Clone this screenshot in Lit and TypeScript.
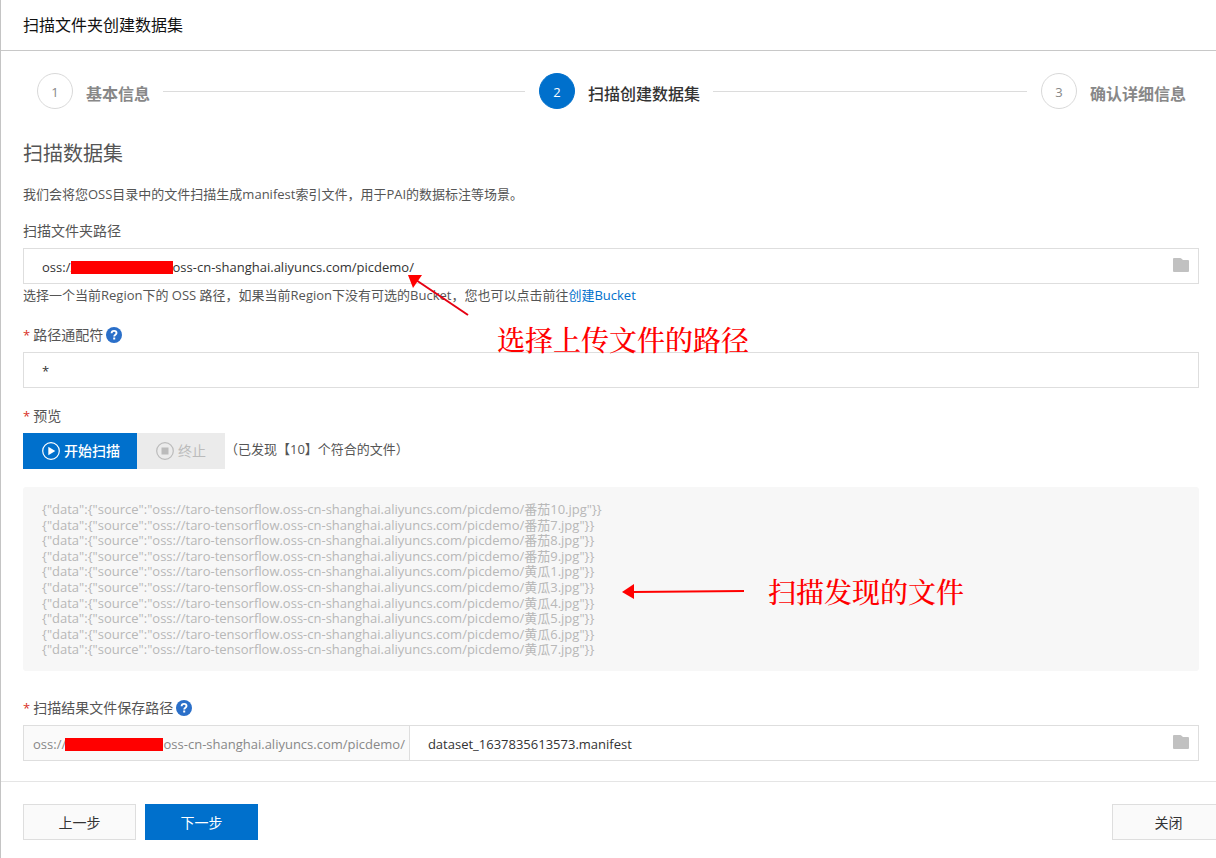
import { LitElement, html, css, svg } from "lit";
import { customElement, property } from "lit/decorators.js";

const BUCKET_PATH = "oss://taro-tensorflow.oss-cn-shanghai.aliyuncs.com/picdemo/";

const FILES = [
  "番茄10", "番茄7", "番茄8", "番茄9", "黄瓜1",
  "黄瓜3", "黄瓜4", "黄瓜5", "黄瓜6", "黄瓜7",
];

const STEPS = ["基本信息", "扫描创建数据集", "确认详细信息"];

const folderIcon = html`<svg width="16" height="14" viewBox="0 0 16 14" aria-hidden="true">
  <path fill="#c1c1c1" d="M1 0h6.2c.5 0 .8.2 1.1.5L10 2h5a1 1 0 0 1 1 1v10a1 1 0 0 1-1 1H1a1 1 0 0 1-1-1V1a1 1 0 0 1 1-1z" />
</svg>`;

const helpIcon = html`<svg class="help-icon" width="16" height="16" viewBox="0 0 16 16" role="img" aria-label="帮助">
  <circle cx="8" cy="8" r="8" fill="#2a6fc9" />
  <path d="M5.6 6.3c0-1.5 1-2.4 2.5-2.4s2.4.9 2.4 2.1c0 1.7-2.3 1.7-2.3 3.5" fill="none" stroke="#fff" stroke-width="1.9" />
  <rect x="7.2" y="10.5" width="2" height="2" fill="#fff" />
</svg>`;

const buttonIcon = (shape: unknown) => html`<svg width="18" height="18" viewBox="0 0 18 18" aria-hidden="true">
  <circle cx="9" cy="9" r="8.3" fill="none" stroke="currentColor" stroke-width="1.2" />
  ${shape}
</svg>`;

@customElement("wizard-steps")
export class WizardSteps extends LitElement {
  @property({ type: Number }) current = 1;

  static styles = css`
    :host { display: block; }
    .steps { display: flex; margin: 0; padding: 0; list-style: none; }
    .step { display: flex; align-items: center; flex: 1 1 0; gap: 13px; padding-left: 14px; color: #888; }
    .step:last-child { flex: none; padding-right: 13px; }
    .number {
      display: flex; align-items: center; justify-content: center; flex: none;
      box-sizing: border-box; width: 36px; height: 36px; padding-top: 2px;
      border: 1px solid #d9d9d9; border-radius: 50%; font-size: 13px;
    }
    .name { padding-top: 6px; font-size: 16px; line-height: 24px; font-weight: 700; white-space: nowrap; }
    .line { flex: 1; height: 1px; background: #dcdcdc; }
    .active { color: #333; }
    .active .number { border-color: #0070cc; background: #0070cc; color: #fff; }
    .active .name { font-weight: 500; }
  `;

  render() {
    return html`<ol class="steps">
      ${STEPS.map((name, i) => html`
        <li class="step ${i === this.current ? "active" : ""}">
          <span class="number">${i + 1}</span>
          <span class="name">${name}</span>
          ${i < STEPS.length - 1 ? html`<span class="line"></span>` : ""}
        </li>`)}
    </ol>`;
  }
}

@customElement("app-root")
export class AppRoot extends LitElement {
  static styles = css`
    :host {
      display: block;
      box-sizing: border-box;
      min-height: 100vh;
      overflow: hidden;
      border-left: 1px solid #c4c4c4;
      background: #fff;
      color: #555;
      font-family: "Open Sans", "Noto Sans CJK SC", sans-serif;
      font-size: 14px;
      line-height: 20px;
    }
    *, *::before { box-sizing: border-box; }
    input, textarea, button { font: inherit; color: inherit; }
    .header { padding: 13px 22px; border-bottom: 1px solid #c8c8c8; }
    .title { margin: 0; font-size: 16px; line-height: 24px; font-weight: 400; color: #111; }
    .content { padding: 22px 17px 20px 22px; }
    .heading { margin: 29px 0 0; font-size: 20px; line-height: 32px; font-weight: 400; }
    .intro { margin: 14px 0 0; font-size: 13px; }
    .field { position: relative; display: flex; flex-direction: column; margin-top: 17px; }
    .label { display: flex; align-items: center; gap: 3px; margin-bottom: 7px; }
    .required::before { content: "*"; color: #d93026; font-size: 13px; }
    .box { position: relative; display: flex; align-items: stretch; height: 36px; border: 1px solid #dedede; }
    .input {
      flex: 1; min-width: 0; padding: 2px 18px 0; border: 0; outline: 0; background: transparent;
      font-size: 13px; color: #333;
    }
    .browse { display: flex; align-items: center; padding: 0 9px 2px; border: 0; background: none; }
    .prefix {
      position: relative; display: flex; align-items: center; padding: 2px 4px 0 9px;
      border-right: 1px solid #dedede; background: #fafafa; color: #888; font-size: 13px;
    }
    .mask { position: absolute; top: 12px; left: 47px; width: 102px; height: 13px; background: #f00; }
    .prefix .mask { left: 41px; width: 98px; }
    .hint { margin: 1px 0 3px; font-size: 13px; }
    .link { color: #0070cc; text-decoration: none; }
    .actions { display: flex; align-items: flex-start; }
    .button {
      display: flex; align-items: center; justify-content: center; gap: 4px;
      height: 36px; padding: 0 18px; border: 1px solid #dedede; background: #fafafa; color: #333;
    }
    .primary { border-color: #0070cc; background: #0070cc; color: #fff; }
    .scan { padding-right: 16px; font-weight: 500; }
    .stop { border-color: #ebebeb; background: #ebebeb; color: #bbb; }
    .found { padding-top: 6px; font-size: 13px; }
    .preview-field { margin-top: 18px; }
    .preview {
      display: block; width: 100%; height: 184px; margin: 18px 0 0; padding: 15px 19px;
      border: 0; border-radius: 3px; resize: none; overflow: hidden;
      background: #f7f7f7; color: #b8b8b8; font-size: 13px; line-height: 1.2; white-space: pre;
    }
    .result { margin-top: 27px; }
    .note {
      position: absolute; color: #f00; font-family: "Noto Serif CJK SC", "Noto Serif", serif;
      font-size: 28px; line-height: 36px; font-weight: 500; white-space: nowrap; pointer-events: none;
    }
    .arrow { position: absolute; pointer-events: none; }
    .path-arrow { top: 54px; left: 385px; }
    .path-note { top: 100px; left: 474px; z-index: 1; }
    .files-arrow { top: 176px; left: 599px; }
    .files-note { top: 167px; left: 745px; }
    .footer { display: flex; gap: 9px; margin-right: -9px; padding: 22px 0 18px 22px; border-top: 1px solid #e5e5e5; }
    .footer .button { width: 113px; padding-top: 2px; }
    .close { margin-left: auto; }
  `;

  render() {
    const preview = FILES.map((f) => `{"data":{"source":"${BUCKET_PATH}${f}.jpg"}}`).join("\n");
    return html`
      <header class="header"><h1 class="title">扫描文件夹创建数据集</h1></header>
      <main class="content">
        <wizard-steps .current=${1}></wizard-steps>
        <h2 class="heading">扫描数据集</h2>
        <p class="intro">我们会将您OSS目录中的文件扫描生成manifest索引文件，用于PAI的数据标注等场景。</p>

        <div class="field">
          <label class="label" for="path">扫描文件夹路径</label>
          <div class="box">
            <input class="input" id="path" type="text" .value=${BUCKET_PATH} />
            <span class="mask"></span>
            <button class="browse" type="button" aria-label="选择文件夹">${folderIcon}</button>
          </div>
          <p class="hint">选择一个当前Region下的 OSS 路径，如果当前Region下没有可选的Bucket，您也可以点击前往<a class="link" href="#">创建Bucket</a></p>
          <svg class="arrow path-arrow" width="62" height="44" viewBox="0 0 62 44" aria-hidden="true">
            <path d="M8 5L60 40" stroke="#e60012" stroke-width="2" />
            <path d="M0 0H14L5 13Z" fill="#f00" />
          </svg>
          <span class="note path-note">选择上传文件的路径</span>
        </div>

        <div class="field">
          <label class="label required" for="wildcard">路径通配符${helpIcon}</label>
          <div class="box"><input class="input" id="wildcard" type="text" .value=${"*"} /></div>
        </div>

        <div class="field preview-field">
          <label class="label required" for="preview">预览</label>
          <div class="actions">
            <button class="button primary scan" type="button">
              ${buttonIcon(svg`<path d="M6.3 4.8v8.4l7-4.2z" fill="currentColor" />`)}开始扫描
            </button>
            <button class="button stop" type="button" disabled>
              ${buttonIcon(svg`<rect x="5.5" y="5.5" width="7" height="7" fill="currentColor" />`)}终止
            </button>
            <span class="found">（已发现【10】个符合的文件）</span>
          </div>
          <textarea class="preview" id="preview" disabled .value=${preview}></textarea>
          <svg class="arrow files-arrow" width="124" height="18" viewBox="0 0 124 18" aria-hidden="true">
            <path d="M10 10L122 9" stroke="#f00" stroke-width="2" />
            <path d="M0 10L12 2V17Z" fill="#f00" />
          </svg>
          <span class="note files-note">扫描发现的文件</span>
        </div>

        <div class="field result">
          <label class="label required" for="manifest">扫描结果文件保存路径${helpIcon}</label>
          <div class="box">
            <span class="prefix">${BUCKET_PATH}<span class="mask"></span></span>
            <input class="input" id="manifest" type="text" .value=${"dataset_1637835613573.manifest"} />
            <button class="browse" type="button" aria-label="选择保存位置">${folderIcon}</button>
          </div>
        </div>
      </main>
      <footer class="footer">
        <button class="button" type="button">上一步</button>
        <button class="button primary" type="button">下一步</button>
        <button class="button close" type="button">关闭</button>
      </footer>
    `;
  }
}
